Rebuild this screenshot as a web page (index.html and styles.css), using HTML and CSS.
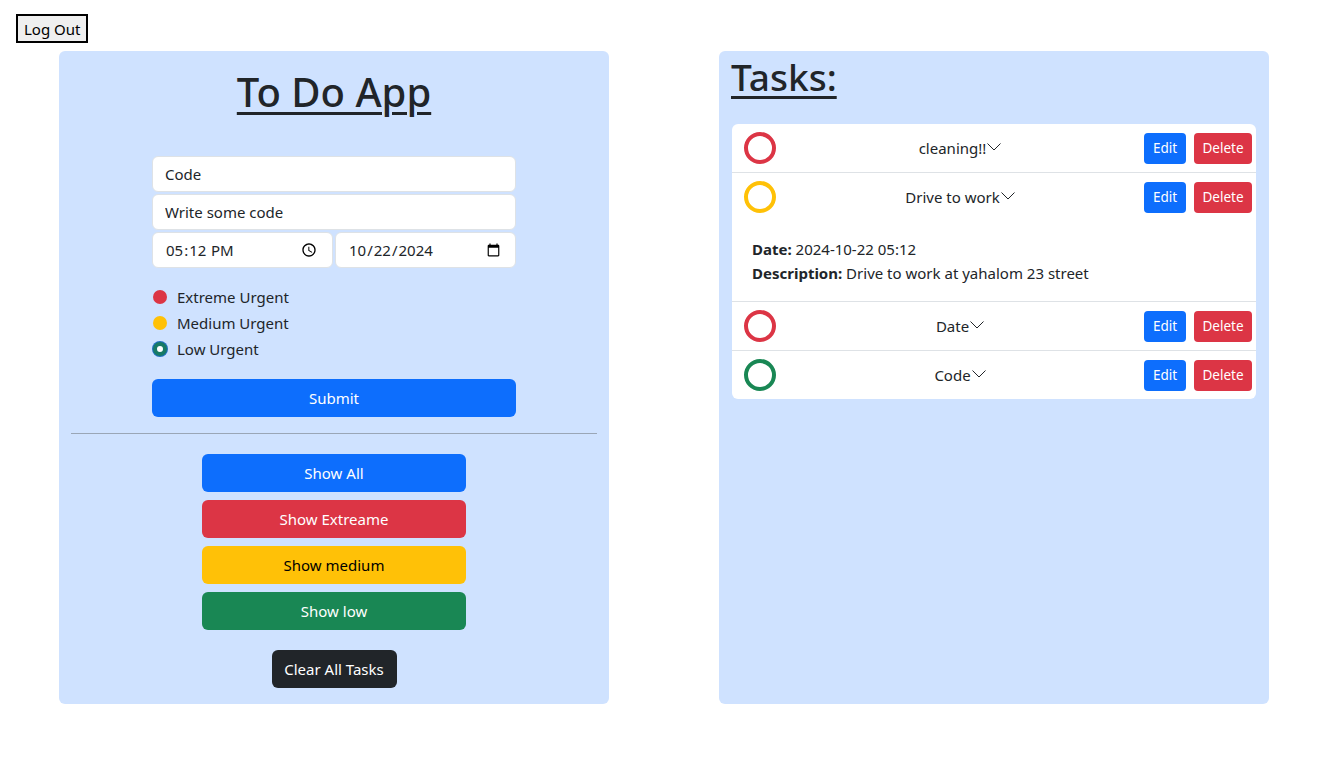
FILE: index.html
```html
<!DOCTYPE html>
<html>
<head>
<meta charset="utf-8">
<link rel="stylesheet" href="styles.css">
</head>
<body>
<div class="topbar"><button class="logout">Log Out</button></div>
<div class="layout">
  <section class="panel panel-left">
    <h1 class="title center">To Do App</h1>
    <form class="form">
      <input class="field" type="text" value="Code">
      <input class="field" type="text" value="Write some code">
      <div class="field-row">
        <input class="field field-half" type="time" value="17:12">
        <input class="field field-half" type="date" value="2024-10-22">
      </div>
      <div class="radios">
        <label class="radio"><span class="dot dot-red"></span>Extreme Urgent</label>
        <label class="radio"><span class="dot dot-yellow"></span>Medium Urgent</label>
        <label class="radio"><span class="dot dot-checked"></span>Low Urgent</label>
      </div>
      <button type="button" class="btn btn-blue btn-block">Submit</button>
    </form>
    <hr class="divider">
    <div class="filters">
      <button class="btn btn-blue">Show All</button>
      <button class="btn btn-red">Show Extreame</button>
      <button class="btn btn-yellow">Show medium</button>
      <button class="btn btn-green">Show low</button>
    </div>
    <div class="clear-wrap"><button class="btn btn-dark">Clear All Tasks</button></div>
  </section>
  <section class="panel panel-right">
    <h1 class="title">Tasks:</h1>
    <ul class="tasks">
      <li class="task">
        <div class="task-head">
          <span class="ring ring-red"></span>
          <span class="task-name">cleaning!!<svg class="chev" viewBox="0 0 14 8" width="14" height="8"><polyline points="0.5,0.5 7,7 13.5,0.5" fill="none" stroke="#212529" stroke-width="1"/></svg></span>
          <button class="btn-sm btn-edit btn-blue">Edit</button>
          <button class="btn-sm btn-del btn-red">Delete</button>
        </div>
      </li>
      <li class="task">
        <div class="task-head">
          <span class="ring ring-yellow"></span>
          <span class="task-name">Drive to work<svg class="chev" viewBox="0 0 14 8" width="14" height="8"><polyline points="0.5,0.5 7,7 13.5,0.5" fill="none" stroke="#212529" stroke-width="1"/></svg></span>
          <button class="btn-sm btn-edit btn-blue">Edit</button>
          <button class="btn-sm btn-del btn-red">Delete</button>
        </div>
        <div class="task-details">
          <p><b>Date:</b> 2024-10-22 05:12</p>
          <p><b>Description:</b> Drive to work at yahalom 23 street</p>
        </div>
      </li>
      <li class="task">
        <div class="task-head">
          <span class="ring ring-red"></span>
          <span class="task-name">Date<svg class="chev" viewBox="0 0 14 8" width="14" height="8"><polyline points="0.5,0.5 7,7 13.5,0.5" fill="none" stroke="#212529" stroke-width="1"/></svg></span>
          <button class="btn-sm btn-edit btn-blue">Edit</button>
          <button class="btn-sm btn-del btn-red">Delete</button>
        </div>
      </li>
      <li class="task">
        <div class="task-head">
          <span class="ring ring-green"></span>
          <span class="task-name">Code<svg class="chev" viewBox="0 0 14 8" width="14" height="8"><polyline points="0.5,0.5 7,7 13.5,0.5" fill="none" stroke="#212529" stroke-width="1"/></svg></span>
          <button class="btn-sm btn-edit btn-blue">Edit</button>
          <button class="btn-sm btn-del btn-red">Delete</button>
        </div>
      </li>
    </ul>
  </section>
</div>
</body>
</html>
```
FILE: styles.css
```css
* { box-sizing: border-box; }
body {
  margin: 0;
  font-family: "Noto Sans", "Open Sans", sans-serif;
  font-size: 15px;
  color: #212529;
  background: #fff;
}
.topbar { padding: 14px 16px 8px; height: 51px; }
.logout {
  font-family: inherit;
  font-size: 15px;
  height: 29px;
  padding: 0 6px;
  background: #efefef;
  border: 2px solid #000;
  color: #000;
  display: block;
}
.layout {
  width: 1210px;
  margin: 0 auto;
  display: flex;
  justify-content: space-between;
  align-items: stretch;
}
.panel {
  width: 550px;
  background: #cfe2ff;
  border-radius: 6px;
  padding: 0 12px 16px;
}
.panel-left { padding-top: 17px; }
.panel-right { padding: 2px 13px 16px 12px; }
.title {
  margin: 0;
  font-size: 37px;
  font-weight: 500;
  line-height: 48px;
  text-decoration: underline;
  text-decoration-thickness: 3px;
  text-underline-offset: 5px;
}
.center { text-align: center; }
.panel-left .title { font-size: 40px; margin-bottom: 40px; }
.form { width: 364px; margin: 0 auto; }
.field {
  display: block;
  width: 100%;
  height: 36px;
  margin: 0 0 2px;
  padding: 0 12px;
  border: 1px solid #dee2e6;
  border-radius: 6px;
  background: #fff;
  font-family: inherit;
  font-size: 15px;
  color: #212529;
  outline: none;
}
.field-row { display: flex; gap: 2px; }
.field-half { flex: 1 1 0; min-width: 0; }
.radios { padding: 14px 0 17px; }
.radio {
  display: flex;
  align-items: center;
  height: 26px;
  font-size: 15px;
}
.dot {
  width: 14px;
  height: 14px;
  border-radius: 50%;
  margin: 0 10px 0 1px;
  flex: none;
}
.dot-red { background: #dc3545; }
.dot-yellow { background: #ffc107; }
.dot-checked {
  background: #fff;
  border: 4px solid #177a66;
  box-shadow: 0 0 0 1px #1f6fbf;
}
.btn {
  display: block;
  height: 38px;
  border: none;
  border-radius: 6px;
  font-family: inherit;
  font-size: 15px;
  color: #fff;
  padding: 0 12px;
}
.btn-block { width: 100%; }
.btn-blue { background: #0d6efd; color: #fff; }
.btn-red { background: #dc3545; color: #fff; }
.btn-yellow { background: #ffc107; color: #000; }
.btn-green { background: #198754; color: #fff; }
.btn-dark { background: #212529; color: #fff; }
.divider {
  margin: 16px 0 20px;
  border: none;
  border-top: 1px solid #9aa6b6;
  height: 0;
}
.filters {
  width: 264px;
  margin: 0 auto;
  display: flex;
  flex-direction: column;
  gap: 8px;
}
.filters .btn { width: 100%; }
.clear-wrap { display: flex; justify-content: center; margin-top: 20px; }
.clear-wrap .btn { width: 125px; padding: 0; }
.tasks {
  list-style: none;
  margin: 23px 0 0 1px;
  padding: 0;
  background: #fff;
  border-radius: 6px;
  overflow: hidden;
}
.task { border-bottom: 1px solid #dee2e6; }
.task:last-child { border-bottom: none; }
.task-head {
  display: flex;
  align-items: center;
  height: 48px;
  padding: 0 4px 0 12px;
  gap: 8px;
}
.ring {
  width: 32px;
  height: 32px;
  border-radius: 50%;
  border: 4px solid;
  flex: none;
}
.ring-red { border-color: #dc3545; }
.ring-yellow { border-color: #ffc107; }
.ring-green { border-color: #198754; }
.task-name {
  flex: 1;
  text-align: center;
  font-size: 15px;
  white-space: nowrap;
}
.chev { vertical-align: 3px; margin-left: 1px; }
.btn-sm {
  height: 31px;
  border: none;
  border-radius: 4px;
  font-family: inherit;
  font-size: 13.5px;
  padding: 0;
  flex: none;
}
.btn-edit { width: 42px; }
.btn-del { width: 58px; }
.task-details { padding: 16px 20px 16px; }
.task-details p { margin: 0; line-height: 24px; font-size: 15px; }
.task-details b { font-weight: 700; }
```
